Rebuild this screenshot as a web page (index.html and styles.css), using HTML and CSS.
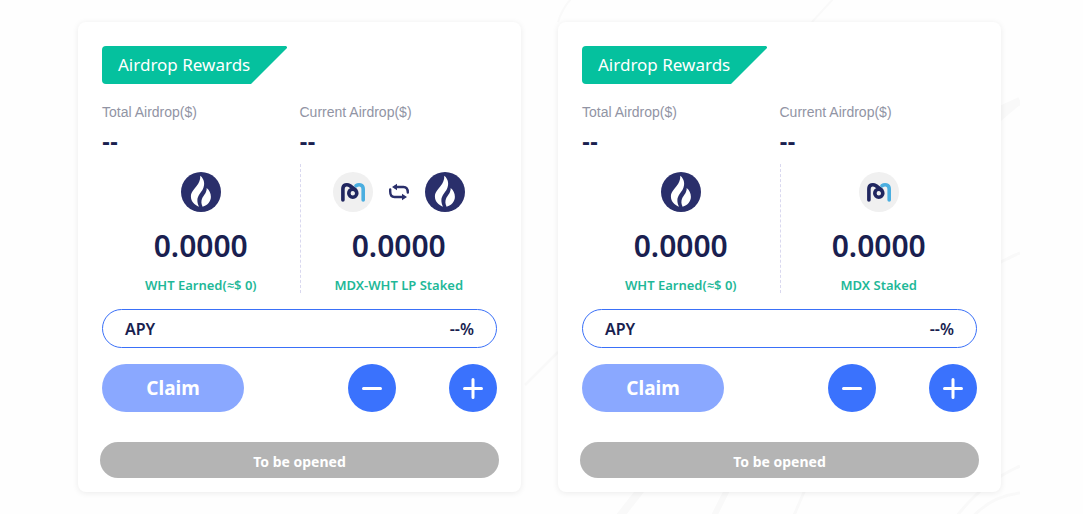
FILE: index.html
```html
<!DOCTYPE html>
<html lang="en">
<head>
<meta charset="utf-8">
<title>Airdrop Rewards</title>
<link rel="stylesheet" href="styles.css">
</head>
<body>
<svg class="sprite" aria-hidden="true">
  <symbol id="flame" viewBox="0 0 40 40">
    <circle cx="20" cy="20" r="20" fill="#2a2f6b"/>
    <path fill="#fff" d="M19.3 3.8C23.5 7.2 24.2 12.6 21.8 17.200C20.200 20.300 16.800 23.500 16.400 27.500C16.200 30 16.900 32.500 18 34.700C13.500 33.300 9.900 29.500 9.900 24.600C9.900 20.300 13 17.200 15.600 14C18 11 19.400 8 19.300 3.800Z"/>
    <path fill="#fff" d="M25.700 16C28.400 18.200 29.900 21.300 29.900 24.700C29.900 29.300 26.600 33.300 21.600 34.700C20.200 32 19.900 28.800 21.300 26C22.700 23.200 25.900 20.500 25.700 16Z"/>
  </symbol>
  <symbol id="mdx" viewBox="0 0 40 40">
    <circle cx="20" cy="20" r="20" fill="#f0f0f0"/>
    <path fill="none" stroke="#4aaee0" stroke-width="3.600" stroke-linecap="round" d="M23 13.800C25.500 12 30.200 12.200 30.200 17V28"/>
    <path fill="none" stroke="#20265f" stroke-width="3.600" stroke-linecap="round" stroke-linejoin="round" d="M9.900 28V17C9.900 12.600 14 11.800 17 13.800L22.500 18"/>
    <circle cx="19.800" cy="21.200" r="4" fill="none" stroke="#20265f" stroke-width="3.600"/>
    <path fill="none" stroke="#f0f0f0" stroke-width="1" stroke-linecap="round" d="M13.300 17.200L15.500 16.400"/>
  </symbol>
  <symbol id="swap" viewBox="0 0 20 18">
    <path fill="none" stroke="#2a2f6b" stroke-width="2.400" stroke-linecap="round" d="M6 4H14.500C17.500 4 18.800 5.500 18.800 9.500M14 14H5.500C2.500 14 1.200 12.500 1.200 8.500V6.500"/>
    <path fill="#2a2f6b" d="M3 4L8 .8V7.200ZM18 14L13 10.800V17.200Z"/>
  </symbol>
</svg>

<svg class="backdrop" viewBox="0 0 500 514" aria-hidden="true">
  <g fill="none" stroke="#f9f9f9">
    <path stroke-width="8" d="M500 101C350 165 220 340 119 492L97 520"/>
    <path stroke-width="6" d="M500 101C390 190 260 370 206 492L192 520"/>
    <path stroke-width="3" d="M500 253C420 285 330 390 284 492L272 520M500 466Q460 484 434 520M500 493Q470 496 450 520M5 385L38 352"/>
    <path stroke-width="2" d="M38 22Q43 6 54 -4M292 22L314 -2"/>
  </g>
</svg>

<main class="pools">
  <section class="card">
    <h2 class="badge">Airdrop Rewards</h2>
    <dl class="totals">
      <div><dt>Total Airdrop($)</dt><dd>--</dd></div>
      <div><dt>Current Airdrop($)</dt><dd>--</dd></div>
    </dl>
    <div class="stats">
      <div class="stat">
        <div class="tokens"><svg class="token"><use href="#flame"/></svg></div>
        <strong class="amount">0.0000</strong>
        <span class="caption">WHT Earned(≈$ 0)</span>
      </div>
      <div class="stat">
        <div class="tokens">
          <svg class="token"><use href="#mdx"/></svg>
          <svg class="swap"><use href="#swap"/></svg>
          <svg class="token"><use href="#flame"/></svg>
        </div>
        <strong class="amount">0.0000</strong>
        <span class="caption">MDX-WHT LP Staked</span>
      </div>
    </div>
    <div class="apy"><span>APY</span><span>--%</span></div>
    <div class="actions">
      <button class="claim" type="button">Claim</button>
      <div class="steppers">
        <button class="step" type="button" aria-label="Unstake"><svg viewBox="0 0 48 48"><path d="M15.500 24.500H32.500"/></svg></button>
        <button class="step" type="button" aria-label="Stake"><svg viewBox="0 0 48 48"><path d="M15.500 24.500H32.500M24 15.500V33.500"/></svg></button>
      </div>
    </div>
    <button class="status" type="button">To be opened</button>
  </section>

  <section class="card">
    <h2 class="badge">Airdrop Rewards</h2>
    <dl class="totals">
      <div><dt>Total Airdrop($)</dt><dd>--</dd></div>
      <div><dt>Current Airdrop($)</dt><dd>--</dd></div>
    </dl>
    <div class="stats">
      <div class="stat">
        <div class="tokens"><svg class="token"><use href="#flame"/></svg></div>
        <strong class="amount">0.0000</strong>
        <span class="caption">WHT Earned(≈$ 0)</span>
      </div>
      <div class="stat">
        <div class="tokens"><svg class="token"><use href="#mdx"/></svg></div>
        <strong class="amount">0.0000</strong>
        <span class="caption">MDX Staked</span>
      </div>
    </div>
    <div class="apy"><span>APY</span><span>--%</span></div>
    <div class="actions">
      <button class="claim" type="button">Claim</button>
      <div class="steppers">
        <button class="step" type="button" aria-label="Unstake"><svg viewBox="0 0 48 48"><path d="M15.500 24.500H32.500"/></svg></button>
        <button class="step" type="button" aria-label="Stake"><svg viewBox="0 0 48 48"><path d="M15.500 24.500H32.500M24 15.500V33.500"/></svg></button>
      </div>
    </div>
    <button class="status" type="button">To be opened</button>
  </section>
</main>
</body>
</html>
```
FILE: styles.css
```css
* { box-sizing: border-box; }
body {
  margin: 0;
  background: #fefefe;
  color: #1a1f50;
  font-family: "Noto Sans", "Open Sans", sans-serif;
}
h2, dl, dd { margin: 0; }
button { border: 0; padding: 0; font: inherit; cursor: pointer; }

.sprite { position: absolute; width: 0; height: 0; }
.backdrop {
  position: absolute;
  z-index: -1;
  top: 0;
  right: 63px;
  width: 500px;
  height: 514px;
}

.pools {
  display: flex;
  gap: 37px;
  padding: 22px 82px 22px 78px;
}
.card {
  flex: 1;
  min-width: 0;
  padding: 24px 24px 14px;
  background: #fff;
  border-radius: 8px;
  box-shadow: 0 1px 6px rgba(0, 0, 0, 0.08);
}

.badge {
  width: 185px;
  padding-left: 16px;
  border-radius: 4px 0 0 4px;
  background: #05c19e;
  color: #fff;
  font-size: 17px;
  font-weight: 400;
  line-height: 38px;
  clip-path: polygon(0 0, calc(100% - 1px) 0, 100% 1px, 100% 2px, calc(100% - 36px) 100%, 0 100%);
}

.totals {
  display: grid;
  grid-template-columns: 1fr 1fr;
  padding-top: 18px;
}
.totals dt {
  color: #9194a4;
  font: 14px/20px "Liberation Sans", sans-serif;
}
.totals dd {
  padding-top: 6px;
  font: bold 24px/28px "Liberation Sans", sans-serif;
}

.stats {
  display: grid;
  grid-template-columns: 1fr 1fr;
  margin-top: 8px;
}
.stat {
  display: flex;
  flex-direction: column;
  align-items: center;
  padding-top: 8px;
  height: 129px;
}
.stat + .stat { border-left: 1px dashed #d9d8ef; }
.tokens { display: flex; align-items: center; gap: 16px; }
.token { width: 40px; height: 40px; }
.swap { width: 20px; height: 18px; }
.amount { font-size: 30px; font-weight: 600; line-height: 40px; margin-top: 14px; }
.caption {
  margin-top: 9px;
  color: #1fb898;
  font-size: 13px;
  font-weight: 600;
  line-height: 20px;
}

.apy {
  display: flex;
  justify-content: space-between;
  margin-top: 16px;
  padding: 1px 22px 0;
  border: 1px solid #3a70f8;
  border-radius: 20px;
  font-size: 16px;
  font-weight: 600;
  line-height: 36px;
}

.actions {
  display: flex;
  justify-content: space-between;
  margin-top: 16px;
}
.claim {
  width: 142px;
  height: 48px;
  border-radius: 24px;
  background: #8aa8ff;
  color: #fff;
  font-size: 19px;
  font-weight: 700;
}
.steppers { display: flex; gap: 53px; }
.step {
  width: 48px;
  height: 48px;
  border-radius: 50%;
  background: #3a72fd;
}
.step svg {
  display: block;
  fill: none;
  stroke: #fff;
  stroke-width: 3;
  stroke-linecap: round;
}

.status {
  display: block;
  width: calc(100% + 4px);
  height: 36px;
  margin: 30px -2px 0;
  padding-top: 4px;
  border-radius: 18px;
  background: #b4b4b4;
  color: #fff;
  font-size: 14px;
  font-weight: 700;
  line-height: 32px;
}
```
